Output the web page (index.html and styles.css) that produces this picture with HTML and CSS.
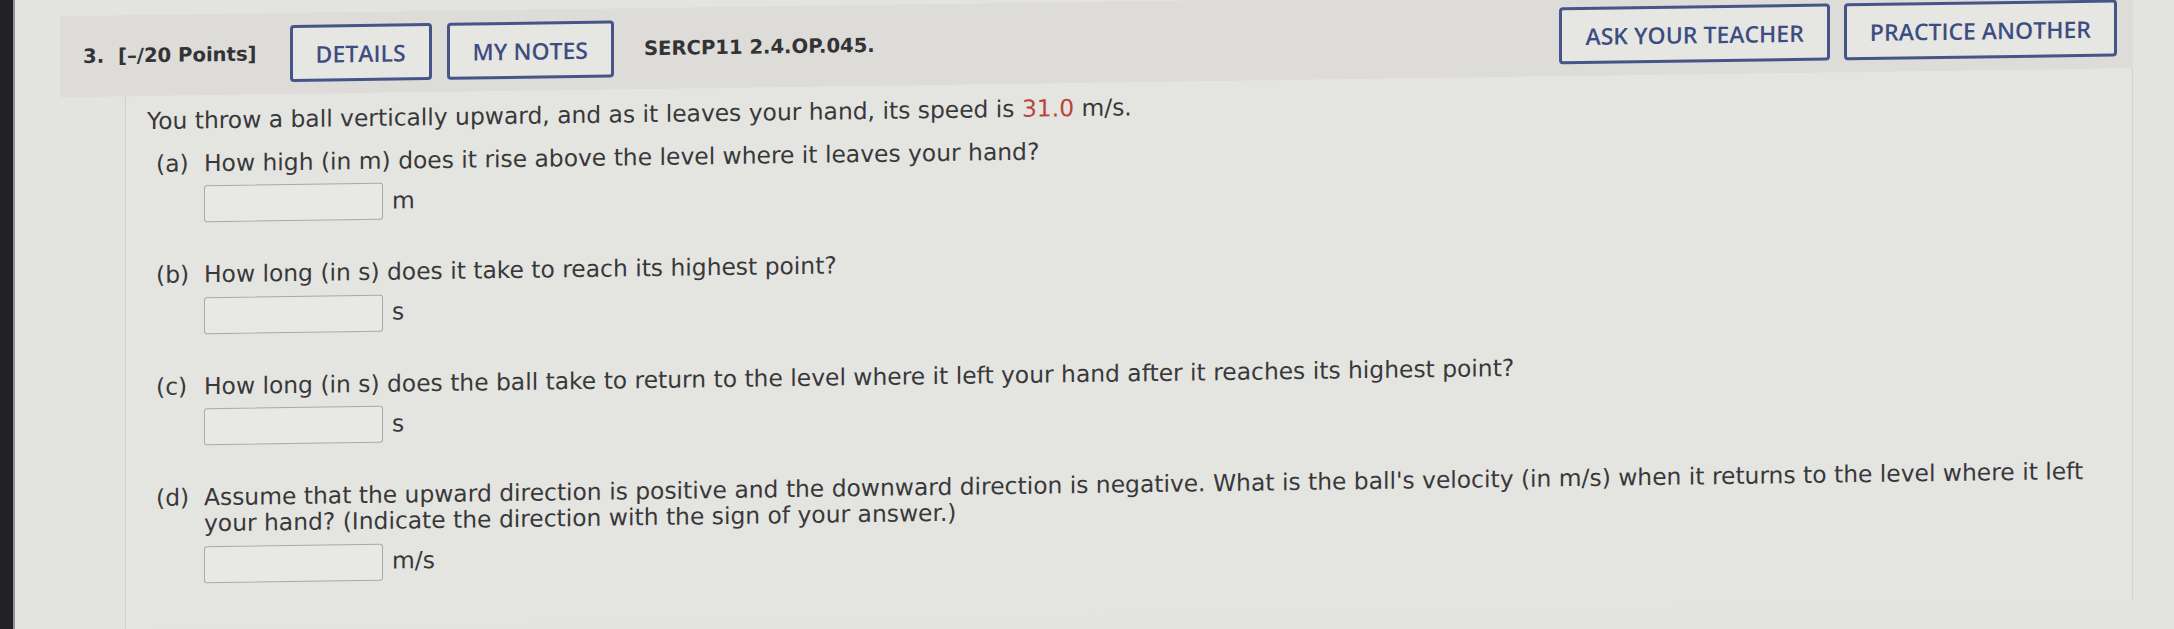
FILE: index.html
```html
<!DOCTYPE html>
<html lang="en">
<head>
<meta charset="utf-8">
<title>Question 3</title>
<link rel="stylesheet" href="styles.css">
</head>
<body>
<div class="bezel"></div>
<main class="screen">
  <section class="question">
    <header class="qhead">
      <div class="qnum"><span>3.</span><span>[–/20 Points]</span></div>
      <div class="btns">
        <button class="btn">DETAILS</button>
        <button class="btn">MY NOTES</button>
      </div>
      <span class="qcode">SERCP11 2.4.OP.045.</span>
      <div class="btns right">
        <button class="btn">ASK YOUR TEACHER</button>
        <button class="btn">PRACTICE ANOTHER</button>
      </div>
    </header>
    <div class="qbody">
      <p class="intro">You throw a ball vertically upward, and as it leaves your hand, its speed is <span class="red">31.0</span> m/s.</p>
      <div class="part">
        <span class="label">(a)</span>
        <div class="ptext">
          <p>How high (in m) does it rise above the level where it leaves your hand?</p>
          <div class="answer"><span class="box"></span><span class="unit">m</span></div>
        </div>
      </div>
      <div class="part">
        <span class="label">(b)</span>
        <div class="ptext">
          <p>How long (in s) does it take to reach its highest point?</p>
          <div class="answer"><span class="box"></span><span class="unit">s</span></div>
        </div>
      </div>
      <div class="part">
        <span class="label">(c)</span>
        <div class="ptext">
          <p>How long (in s) does the ball take to return to the level where it left your hand after it reaches its highest point?</p>
          <div class="answer"><span class="box"></span><span class="unit">s</span></div>
        </div>
      </div>
      <div class="part">
        <span class="label">(d)</span>
        <div class="ptext">
          <p>Assume that the upward direction is positive and the downward direction is negative. What is the ball's velocity (in m/s) when it returns to the level where it left your hand? (Indicate the direction with the sign of your answer.)</p>
          <div class="answer"><span class="box"></span><span class="unit">m/s</span></div>
        </div>
      </div>
    </div>
  </section>
</main>
</body>
</html>
```
FILE: styles.css
```css
html, body {
  margin: 0;
  padding: 0;
  height: 100%;
  overflow: hidden;
}
body {
  background: #e3e3df;
  display: flex;
  font-family: "DejaVu Sans", Verdana, sans-serif;
  color: #38383b;
}
.bezel {
  flex: 0 0 13px;
  background: #222226;
  border-right: 2px solid #8e949e;
}
.screen {
  flex: 1;
  height: 100%;
  box-sizing: border-box;
  padding: 15px 41px 0 45px;
  transform: skewY(-0.8deg);
  transform-origin: 135px 0;
}
.question {
  display: flex;
  flex-direction: column;
  height: 100%;
}
.qhead {
  flex: 0 0 81px;
  background: #dddcd8;
  display: flex;
  align-items: center;
  padding: 0 16px 0 23px;
}
.qnum {
  display: flex;
  gap: 14px;
  font-weight: bold;
  font-size: 19.6px;
  color: #333336;
  margin-right: 33px;
}
.btns {
  display: flex;
  gap: 15px;
}
.btns.right {
  margin-left: auto;
  gap: 14px;
}
.btn {
  font-family: "Open Sans", "DejaVu Sans", sans-serif;
  font-weight: 600;
  font-size: 23px;
  color: #3d4d82;
  background: #e6e6e3;
  border: 3px solid #45558a;
  border-radius: 4px;
  height: 57px;
  padding: 0 23px;
}
.qcode {
  margin-left: 30px;
  font-weight: bold;
  font-size: 19.6px;
  color: #333336;
}
.qbody {
  flex: 1;
  margin-left: 65px;
  background: #e4e4e0;
  border-left: 1px solid #cfcfcb;
  border-right: 1px solid #d2d2ce;
  padding: 13px 20px 0 21px;
  font-size: 23.4px;
  line-height: 25.6px;
}
.qbody p {
  margin: 0;
}
.intro {
  margin-bottom: 17px !important;
}
.red {
  color: #b8443b;
}
.part {
  display: grid;
  grid-template-columns: 48px 1fr;
  margin-left: 9px;
  margin-bottom: 40px;
}
.ptext p {
  margin-bottom: 9px !important;
}
.answer {
  display: flex;
  align-items: center;
  gap: 9px;
}
.box {
  width: 179px;
  height: 37px;
  box-sizing: border-box;
  border: 1.5px solid #a9a9a6;
  border-radius: 3px;
  background: #e8e8e5;
}
```
